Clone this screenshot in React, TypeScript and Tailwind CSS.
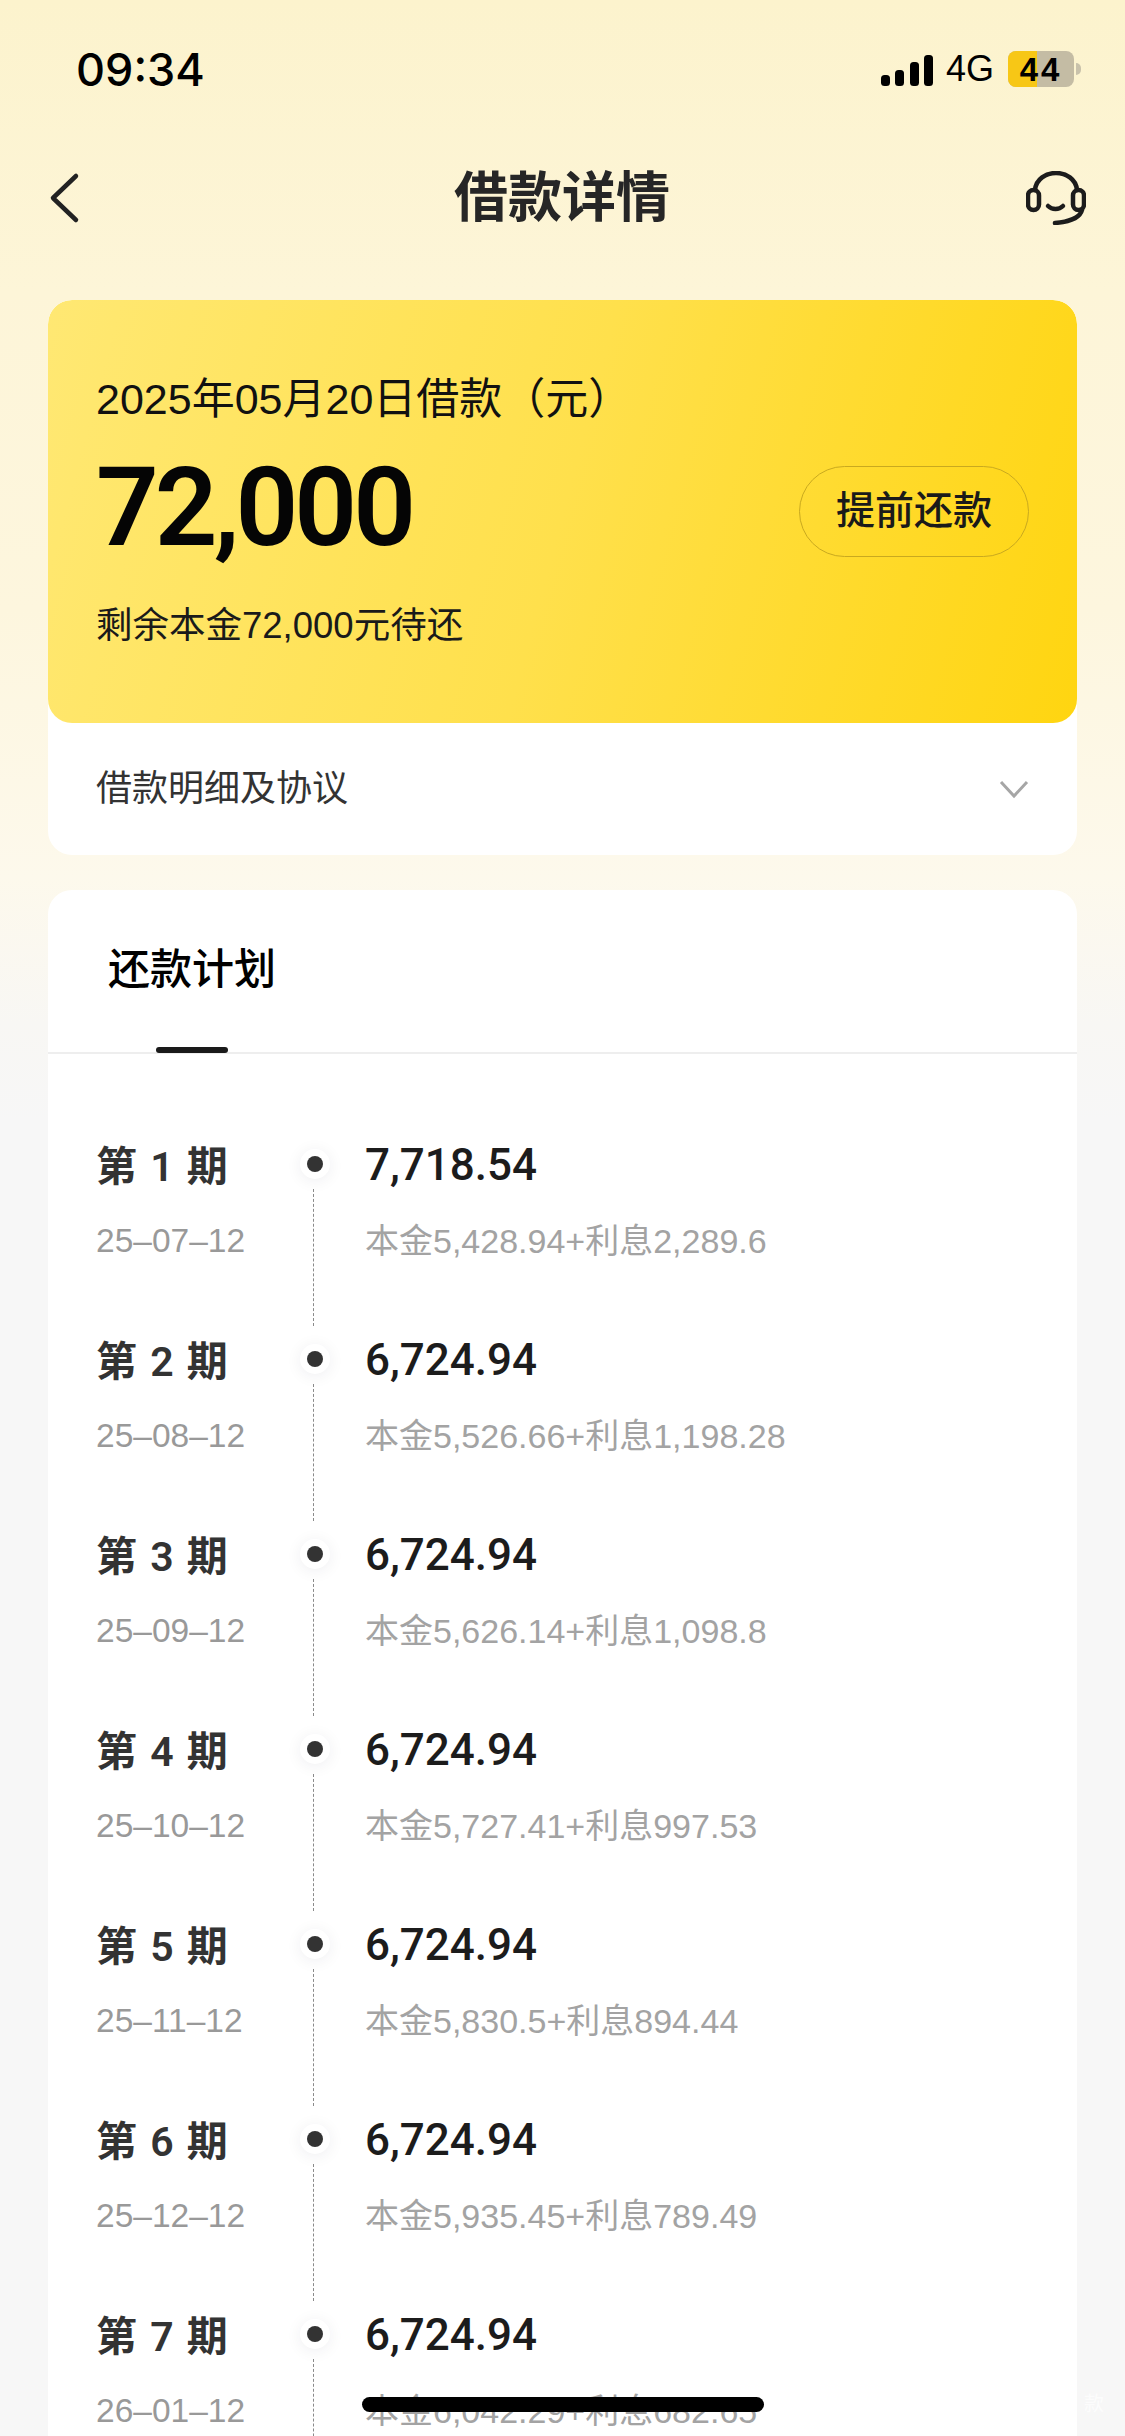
const FONT = "font-['Liberation_Sans','Noto_Sans_CJK_SC',sans-serif]";
const MEDIUM = "font-['Roboto','Noto_Sans_CJK_SC',sans-serif]";

const plans = [
  { no: 1, date: "25–07–12", amount: "7,718.54", detail: "本金5,428.94+利息2,289.6" },
  { no: 2, date: "25–08–12", amount: "6,724.94", detail: "本金5,526.66+利息1,198.28" },
  { no: 3, date: "25–09–12", amount: "6,724.94", detail: "本金5,626.14+利息1,098.8" },
  { no: 4, date: "25–10–12", amount: "6,724.94", detail: "本金5,727.41+利息997.53" },
  { no: 5, date: "25–11–12", amount: "6,724.94", detail: "本金5,830.5+利息894.44" },
  { no: 6, date: "25–12–12", amount: "6,724.94", detail: "本金5,935.45+利息789.49" },
  { no: 7, date: "26–01–12", amount: "6,724.94", detail: "本金6,042.29+利息682.65" },
];

function StatusBar() {
  return (
    <div className="flex h-[138px] items-center justify-between pl-[76px] pr-[44px]">
      <span className="font-['Inter',sans-serif] text-[45px] leading-none font-medium text-black">09:34</span>
      <div className="flex items-center">
        <svg width="53" height="31" viewBox="0 0 53 31" className="mr-[12px] mt-[2px]">
          <rect x="0" y="20" width="9" height="11" rx="3.5" fill="#000" />
          <rect x="14" y="15" width="9" height="16" rx="3.5" fill="#000" />
          <rect x="29" y="7" width="9" height="24" rx="3.5" fill="#000" />
          <rect x="43" y="0" width="9" height="31" rx="3.5" fill="#000" />
        </svg>
        <span className="mr-[14px] text-[36px] leading-none text-black">4G</span>
        <div className="relative h-[36px] w-[66px] overflow-hidden rounded-[8px] bg-[#c4bca4]">
          <div className="absolute inset-y-0 left-0 w-[29px] bg-[#f7c716]" />
          <span className="absolute inset-0 flex items-center justify-center text-[33px] leading-none font-bold tracking-[3px] text-black">44</span>
        </div>
        <div className="ml-[2px] h-[12px] w-[5px] rounded-r-full bg-[#c9c2ab]" />
      </div>
    </div>
  );
}

function NavBar() {
  return (
    <div className="flex h-[120px] items-center justify-between pl-[46px] pr-[39px]">
      <div className="w-[52px]">
        <svg width="36" height="52" viewBox="0 0 36 52" fill="none">
          <path d="M30 4 L7 26 L30 48" stroke="#222" strokeWidth="4.5" strokeLinecap="round" strokeLinejoin="round" />
        </svg>
      </div>
      <h1 className="text-[54px] leading-none font-bold text-[#262626]">借款详情</h1>
      <svg width="60" height="54" viewBox="0 0 60 54" fill="none" stroke="#1c1c1c" strokeWidth="4.5" strokeLinecap="round">
        <path d="M9 19 C10 8 20 2 30 2 C40 2 50 8 51 19" />
        <rect x="2" y="19" width="11" height="20" rx="5.5" />
        <rect x="47" y="19" width="11" height="20" rx="5.5" />
        <path d="M22 35 C26 39 33 39 37 35" />
        <path d="M56 39 C54 47 42 51 29 52" />
      </svg>
    </div>
  );
}

function SummaryCard() {
  return (
    <section className="overflow-hidden rounded-[24px] bg-white">
      <div className="h-[423px] rounded-[24px] bg-[linear-gradient(105deg,#ffe873_0%,#ffe04c_50%,#ffd510_100%)] pt-[73px] pl-[48px] pr-[48px]">
        <p className="text-[43px] leading-[52px] text-[#111]">2025年05月20日借款（元）</p>
        <div className="mt-[28px] flex items-center justify-between">
          <span className={`${MEDIUM} text-[110px] leading-[110px] font-semibold tracking-[-4px] text-[#050505]`}>72,000</span>
          <button className={`${MEDIUM} mt-[6px] flex h-[91px] w-[230px] items-center justify-center rounded-full border border-[#c9a91f] text-[39px] font-medium text-[#1a1a1a]`}>
            提前还款
          </button>
        </div>
        <p className="mt-[39px] text-[36.5px] leading-[48px] text-[#1a1a1a]">剩余本金72,000元待还</p>
      </div>
      <div className="flex h-[132px] items-center justify-between pl-[48px] pr-[48px]">
        <span className="text-[36px] text-[#333]">借款明细及协议</span>
        <svg width="30" height="20" viewBox="0 0 30 20" fill="none">
          <path d="M2 3 L15 17 L28 3" stroke="#a6a6a6" strokeWidth="3" />
        </svg>
      </div>
    </section>
  );
}

function PlanRow({ no, date, amount, detail }: (typeof plans)[number]) {
  return (
    <div className="flex h-[195px]">
      <div className="w-[245px] pl-[48px]">
        <p className={`${MEDIUM} text-[41px] leading-[56px] font-semibold [word-spacing:3px] text-[#333]`}>第 {no} 期</p>
        <p className="mt-[24px] text-[33.5px] leading-[44px] text-[#999]">{date}</p>
      </div>
      <div className="mr-[28px] flex w-[44px] flex-col items-center pt-[3px]">
        <div className="flex h-[44px] w-[44px] items-center justify-center">
          <div className="flex h-[30px] w-[30px] items-center justify-center rounded-full bg-white shadow-[0_2px_16px_rgba(20,20,60,0.07)]">
            <div className="h-[16px] w-[16px] rounded-full bg-[#333]" />
          </div>
        </div>
        <div className="mt-[3px] mr-[4px] h-[137px] border-l border-dashed border-[#8a8a8a]" />
      </div>
      <div>
        <p className={`${MEDIUM} text-[44px] leading-[52px] font-medium text-[#1c1c1c]`}>{amount}</p>
        <p className="mt-[28px] text-[34px] leading-[44px] text-[#a3a3a3]">{detail}</p>
      </div>
    </div>
  );
}

function PlanCard() {
  return (
    <section className="mt-[35px] rounded-t-[24px] bg-white">
      <div className="relative h-[164px] border-b-2 border-[#eeeeee]">
        <span className={`${MEDIUM} absolute left-[60px] top-[50px] text-[42px] leading-[60px] font-medium text-black`}>还款计划</span>
        <div className="absolute left-[108px] bottom-[-1px] h-[6px] w-[72px] rounded-full bg-[#1a1a1a]" />
      </div>
      <div className="pt-[85px]">
        {plans.map((p) => (
          <PlanRow key={p.no} {...p} />
        ))}
      </div>
    </section>
  );
}

export default function App() {
  return (
    <div className={`${FONT} relative h-[2436px] w-[1125px] overflow-hidden bg-[linear-gradient(180deg,#fcf3cd_0%,#fdf5d8_12%,#fdf6de_25%,#fdf9ec_36%,#f8f7f4_42%,#f7f7f7_46%,#f7f7f7_100%)]`}>
      <StatusBar />
      <NavBar />
      <div className="mt-[42px] px-[48px]">
        <SummaryCard />
        <PlanCard />
      </div>
      <div className="absolute bottom-[24px] left-[362px] h-[15px] w-[402px] rounded-full bg-black" />
      <span className="absolute right-[21px] bottom-[22px] text-[20px] leading-none text-white/70">款</span>
    </div>
  );
}
